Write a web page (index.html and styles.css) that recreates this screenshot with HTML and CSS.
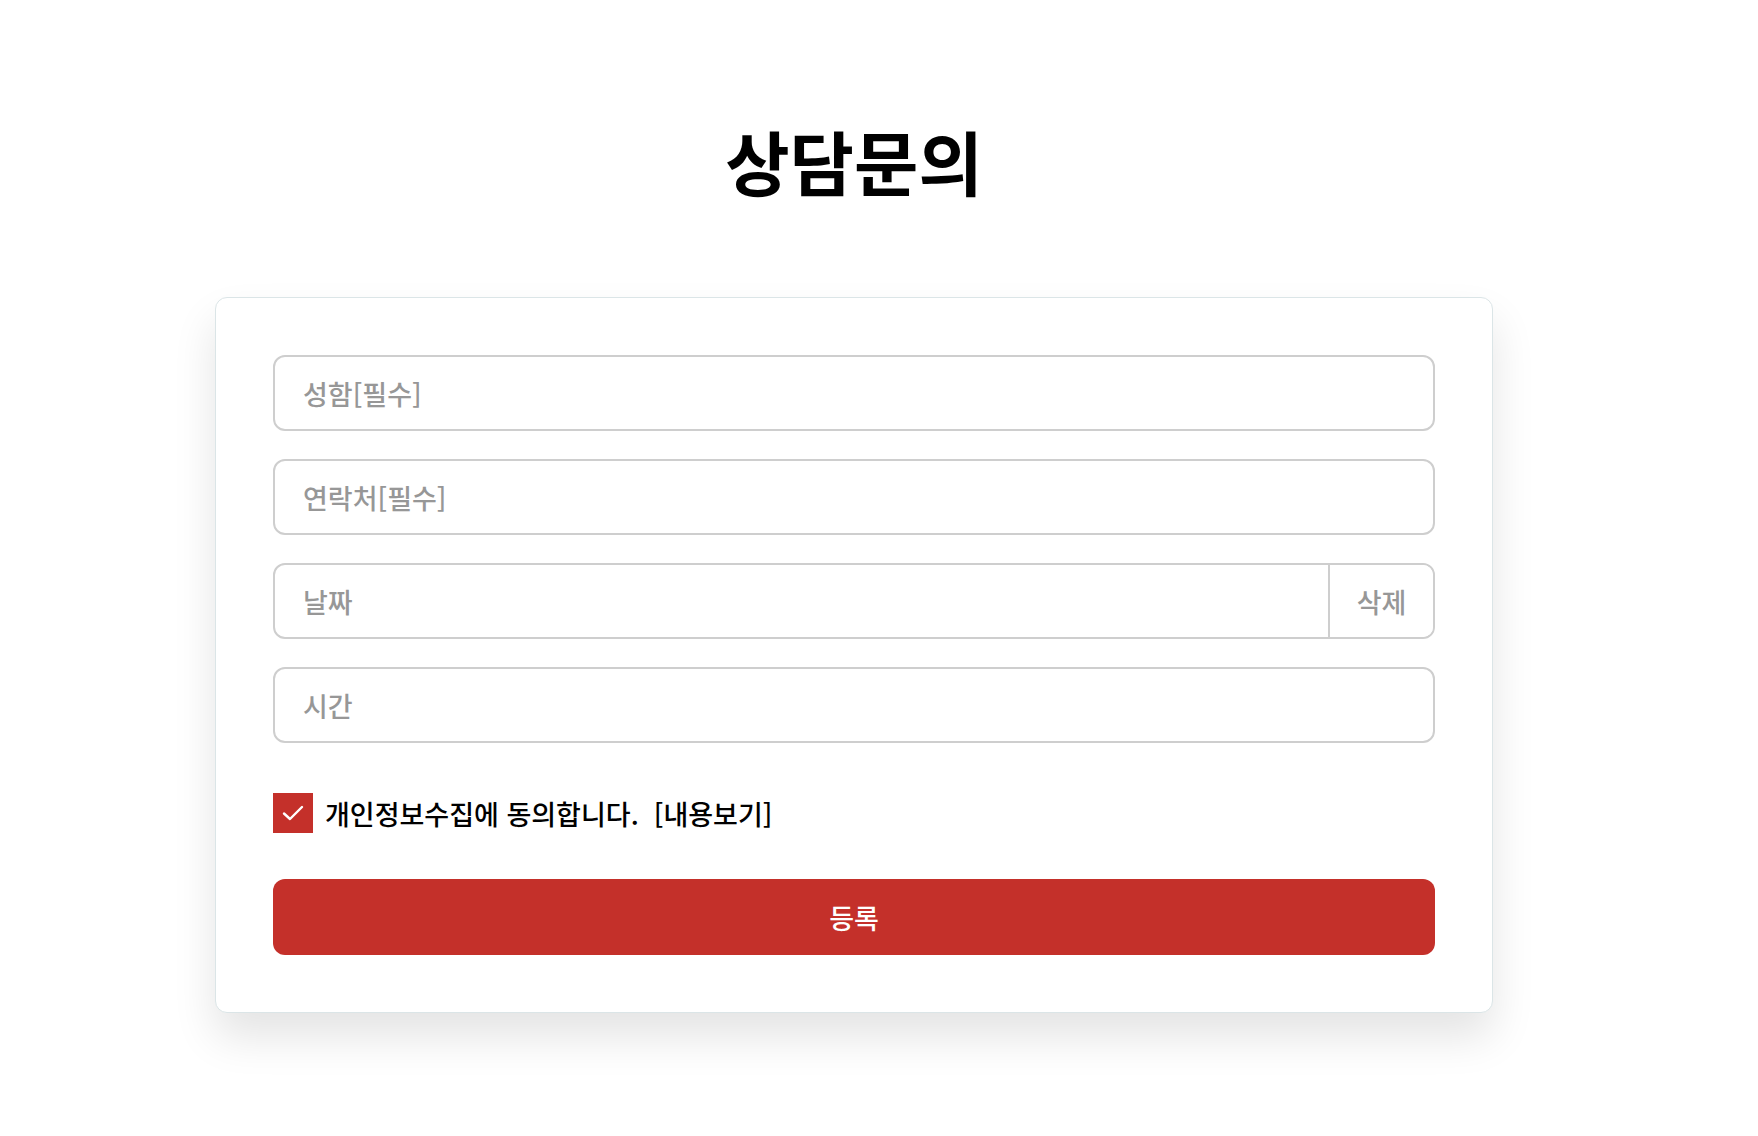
FILE: index.html
```html
<!DOCTYPE html>
<html lang="ko">
<head>
  <meta charset="UTF-8">
  <meta name="viewport" content="width=device-width, initial-scale=1.0">
  <title>상담문의</title>
  <link rel="stylesheet" href="styles.css">
</head>
<body>

  <div class="wrap">
    <h1 class="title">상담문의</h1>

    <!-- 상담 신청 폼 -->
    <form class="form-box">
      <input type="text" class="field" placeholder="성함[필수]">
      <input type="text" class="field" placeholder="연락처[필수]">

      <div class="field-group">
        <input type="text" class="field-inner" placeholder="날짜">
        <button type="button" class="btn-clear">삭제</button>
      </div>

      <input type="text" class="field" placeholder="시간">

      <label class="agree">
        <input type="checkbox" checked>
        <span class="check-box">
          <svg width="22" height="16" viewBox="0 0 22 16" fill="none">
            <path d="M2 8.5 L8 14 L20 2" stroke="#fff" stroke-width="2.4" stroke-linecap="round" stroke-linejoin="round"/>
          </svg>
        </span>
        <span class="agree-text">개인정보수집에 동의합니다. &nbsp;[내용보기]</span>
      </label>

      <button type="submit" class="btn-submit">등록</button>
    </form>
  </div>

</body>
</html>
```

FILE: styles.css
```css
body {
  margin: 0;
  padding: 0;
  background-color: #fff;
  font-family: "Noto Sans CJK KR", "Noto Sans", sans-serif;
  color: #000;
}

.wrap {
  width: 1278px;
  margin: 0 0 0 215px;
  padding-bottom: 120px;
}

.title {
  margin: 119px 0 94px;
  font-size: 70px;
  line-height: 1.2;
  font-weight: 700;
  text-align: center;
}

.form-box {
  display: flex;
  flex-direction: column;
  gap: 28px;
  padding: 57px;
  background-color: #fff;
  border: 1px solid #dbe5e7;
  border-radius: 12px;
  box-shadow: 0 24px 44px rgba(0, 0, 0, 0.11);
}

.field,
.field-group {
  box-sizing: border-box;
  width: 100%;
  height: 76px;
  border: 2px solid #cecece;
  border-radius: 12px;
  background-color: #fff;
}

.field,
.field-inner {
  padding: 0 28px;
  font-family: inherit;
  font-size: 27px;
  font-weight: 500;
  color: #333;
  outline: none;
}

.field::placeholder,
.field-inner::placeholder {
  color: #979797;
}

.field-group {
  display: flex;
  overflow: hidden;
}

.field-inner {
  flex: 1;
  border: none;
  background: transparent;
}

.btn-clear {
  width: 105px;
  border: none;
  border-left: 2px solid #cecece;
  background: #fff;
  font-family: inherit;
  font-size: 27px;
  font-weight: 500;
  color: #979797;
  cursor: pointer;
}

.agree {
  display: flex;
  align-items: center;
  gap: 12px;
  margin-top: 22px;
  cursor: pointer;
}

.agree input {
  display: none;
}

.check-box {
  display: flex;
  align-items: center;
  justify-content: center;
  width: 40px;
  height: 40px;
  background-color: #c4302a;
}

.agree-text {
  font-size: 27px;
  font-weight: 500;
  line-height: 1;
}

.btn-submit {
  height: 76px;
  margin-top: 18px;
  border: none;
  border-radius: 12px;
  background-color: #c4302a;
  color: #fff;
  font-family: inherit;
  font-size: 27px;
  font-weight: 500;
  cursor: pointer;
}
```
